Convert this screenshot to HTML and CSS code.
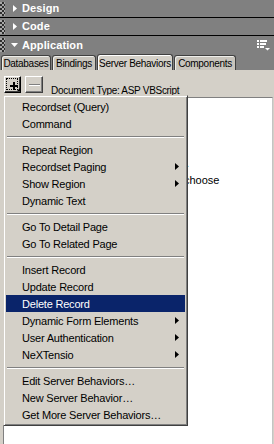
FILE: index.html
```html
<!DOCTYPE html>
<html>
<head>
<meta charset="utf-8">
<link rel="stylesheet" href="styles.css">
</head>
<body>
<div class="app">
  <div class="hdr"><span class="grip"></span><span class="tri-r"></span><span class="title">Design</span></div>
  <div class="hdr"><span class="grip"></span><span class="tri-r"></span><span class="title">Code</span></div>
  <div class="hdr hdr-app"><span class="grip"></span><span class="tri-d"></span><span class="title">Application</span>
    <svg class="opts" width="13" height="11" viewBox="0 0 13 11">
      <rect x="0" y="0" width="2" height="2"/><rect x="3" y="0" width="7" height="2"/>
      <rect x="0" y="3" width="2" height="2"/><rect x="3" y="3" width="6" height="2"/>
      <rect x="0" y="6" width="2" height="2"/><rect x="3" y="6" width="4" height="2"/>
      <polygon points="8,8 13,8 10.5,10.5"/>
    </svg>
  </div>
  <div class="tabs">
    <div class="tab t1">Databases</div>
    <div class="tab t2">Bindings</div>
    <div class="tab t3 active">Server Behaviors</div>
    <div class="tab t4">Components</div>
  </div>
  <div class="panel">
    <div class="toolbar">
      <div class="btn plus"><span class="pg"></span><span class="pdrop"></span></div>
      <div class="btn minus"><span class="mg"></span></div>
      <span class="doctype">Document Type: ASP VBScript</span>
    </div>
    <div class="list">
      <div class="ln"></div>
      <div class="ln"></div>
      <div class="ln"></div>
      <div class="ln ln-a">.</div>
      <div class="ln ln-b">choose</div>
    </div>
  </div>
  <div class="menu">
    <div class="item">Recordset (Query)</div>
    <div class="item">Command</div>
    <div class="sep"></div>
    <div class="item">Repeat Region</div>
    <div class="item">Recordset Paging<span class="arr"></span></div>
    <div class="item">Show Region<span class="arr"></span></div>
    <div class="item">Dynamic Text</div>
    <div class="sep"></div>
    <div class="item">Go To Detail Page</div>
    <div class="item">Go To Related Page</div>
    <div class="sep"></div>
    <div class="item">Insert Record</div>
    <div class="item">Update Record</div>
    <div class="item sel">Delete Record</div>
    <div class="item">Dynamic Form Elements<span class="arr"></span></div>
    <div class="item">User Authentication<span class="arr"></span></div>
    <div class="item">NeXTensio<span class="arr"></span></div>
    <div class="sep"></div>
    <div class="item">Edit Server Behaviors…</div>
    <div class="item">New Server Behavior…</div>
    <div class="item">Get More Server Behaviors…</div>
  </div>
</div>
</body>
</html>
```
FILE: styles.css
```css
* { box-sizing: border-box; }
html, body { margin: 0; padding: 0; }
body {
  width: 274px;
  height: 444px;
  overflow: hidden;
  background: #d4d0c8;
  font-family: "Liberation Sans", Arial, sans-serif;
}
.app {
  position: relative;
  width: 274px;
  height: 444px;
  display: flex;
  flex-direction: column;
}
.hdr {
  height: 18px;
  border-bottom: 1px solid #000;
  background: #808080;
  display: flex;
  align-items: center;
  color: #fff;
  font-weight: bold;
  font-size: 11px;
  flex: none;
}
.hdr-app { height: 18px; border-bottom: 0; }
.grip {
  width: 5px;
  height: 14px;
  background: repeating-conic-gradient(#2e2e2e 0 25%, #a8a8a8 0 50%) 0 0 / 4px 4px;
  flex: none;
}
.tri-r {
  width: 4px;
  height: 7px;
  margin-left: 8px;
  margin-right: 5px;
  background: #fff;
  clip-path: polygon(0 0, 100% 50%, 0 100%);
  flex: none;
}
.tri-d {
  width: 7px;
  height: 4px;
  margin-left: 6px;
  margin-right: 4px;
  background: #fff;
  clip-path: polygon(0 0, 100% 0, 50% 100%);
  flex: none;
}
.title { line-height: 13px; letter-spacing: 0.1px; }
.opts { margin-left: auto; margin-right: 4px; fill: #fff; flex: none; }

.tabs {
  height: 16px;
  background: #808080;
  display: flex;
  align-items: flex-end;
  gap: 1px;
  padding-left: 1px;
  flex: none;
}
.tab {
  height: 15px;
  border: 1px solid #404040;
  border-bottom: 0;
  border-radius: 3px 3px 0 0;
  background: #c8c4bc;
  box-shadow: inset 1px 1px 0 #eeeeea;
  font-size: 10px;
  letter-spacing: -0.3px;
  display: flex;
  align-items: center;
  justify-content: center;
  color: #000;
  padding-top: 1px;
}
.tab.active { height: 16px; background: #d4d0c8; box-shadow: inset 1px 1px 0 #fff; }
.t1 { width: 50px; }
.t2 { width: 44px; }
.t3 { width: 76px; }
.t4 { width: 62px; }

.panel {
  flex: 1;
  display: flex;
  flex-direction: column;
  background: #d4d0c8;
}
.toolbar {
  height: 27px;
  padding: 6px 0 0 4px;
  display: flex;
  align-items: flex-end;
  flex: none;
}
.btn {
  height: 17px;
  border: 1px solid;
  border-color: #fff #404040 #404040 #fff;
  box-shadow: inset -1px -1px 0 #808080;
  background: #d4d0c8;
  align-self: flex-start;
  flex: none;
  position: relative;
}
.plus {
  width: 17px;
  border-color: #fff #000 #000 #fff;
  box-shadow: inset -1px -1px 0 #404040;
}
.plus::after {
  content: "";
  position: absolute;
  left: 1px;
  top: 1px;
  right: 2px;
  bottom: 2px;
  border: 1px dotted #000;
}
.pg {
  position: absolute;
  left: 5px;
  top: 5px;
  width: 8px;
  height: 8px;
}
.pg::before, .pg::after {
  content: "";
  position: absolute;
  background: #000;
}
.pg::before { left: 0; top: 3px; width: 8px; height: 2px; }
.pg::after { left: 3px; top: 0; width: 2px; height: 8px; }
.pdrop {
  position: absolute;
  left: 12px;
  top: 11px;
  width: 3px;
  height: 3px;
  background: #000;
  clip-path: polygon(100% 0, 100% 100%, 0 100%);
}
.minus { width: 18px; margin-left: 4px; }
.mg {
  position: absolute;
  left: 3px;
  top: 7px;
  width: 11px;
  height: 2px;
  border-top: 1px solid #808080;
  border-bottom: 1px solid #fff;
}
.doctype {
  margin-left: 8px;
  font-size: 10px;
  letter-spacing: -0.3px;
  line-height: 12px;
  color: #000;
  white-space: nowrap;
}
.list {
  flex: 1;
  margin: 0 1px 0 3px;
  background: #fff;
  border-top: 1px solid #808080;
  border-left: 1px solid #808080;
  border-right: 1px solid #c4c4c4;
  padding: 6px 0 0 4px;
  font-size: 11px;
  line-height: 17px;
  color: #000;
  overflow: hidden;
}
.ln { white-space: nowrap; height: 17px; }
.ln-a { padding-left: 178px; }
.ln-b { padding-left: 176px; }

.menu {
  position: absolute;
  left: 3px;
  top: 95px;
  width: 185px;
  padding: 2px;
  background: #d4d0c8;
  border: 1px solid;
  border-color: #d4d0c8 #404040 #404040 #d4d0c8;
  box-shadow: inset 1px 1px 0 #fff, inset -1px -1px 0 #808080;
  font-size: 11px;
  letter-spacing: -0.2px;
  color: #000;
}
.item {
  height: 17px;
  padding-left: 16px;
  display: flex;
  align-items: center;
  white-space: nowrap;
}
.item.sel { background: #0a246a; color: #fff; }
.arr {
  width: 4px;
  height: 7px;
  margin-left: auto;
  margin-right: 6px;
  background: #000;
  clip-path: polygon(0 0, 100% 50%, 0 100%);
  flex: none;
}
.sep {
  height: 9px;
  padding: 4px 1px 0;
}
.sep::before {
  content: "";
  display: block;
  border-top: 1px solid #808080;
  border-bottom: 1px solid #fff;
}
```
